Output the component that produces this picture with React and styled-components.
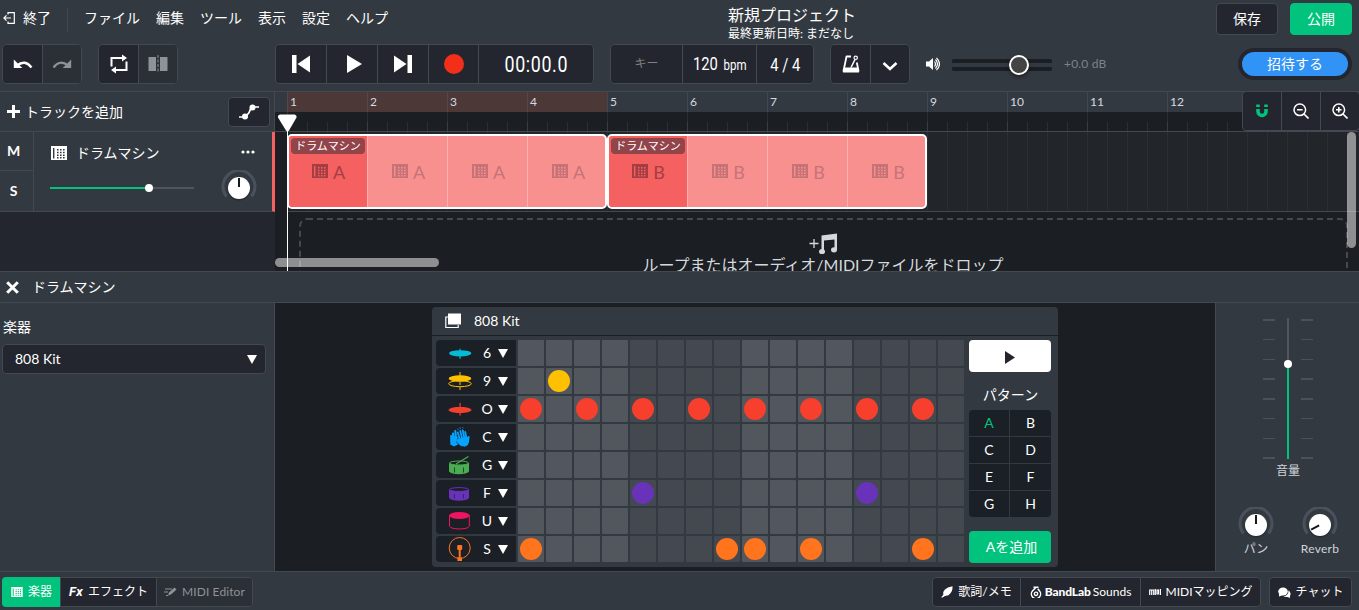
import React from "react";
import styled, { createGlobalStyle, css } from "styled-components";

const colors = {
  panel: "#333940",
  dark: "#23262e",
  darker: "#1b1e22",
  pad: "#1b1f26",
  line: "#44484f",
  green: "#02c37d",
  red: "#f56060",
};

const GlobalStyle = createGlobalStyle`
  * {
    box-sizing: border-box;
  }
  body {
    margin: 0;
    overflow: hidden;
    background: ${colors.panel};
  }
`;

const Page = styled.div`
  display: flex;
  flex-direction: column;
  width: 1359px;
  height: 610px;
  overflow: hidden;
  background: ${colors.panel};
  color: #fff;
  font-family: Lato, "Noto Sans CJK JP", sans-serif;
  font-size: 14px;
  line-height: 20px;
  white-space: nowrap;
  svg {
    display: block;
    flex: none;
  }
`;

const Header = styled.header`
  height: 92px;
  flex: none;
  border-bottom: 1px solid ${colors.line};
`;

const MenuRow = styled.div`
  display: grid;
  grid-template-columns: 728px 1fr auto;
  height: 44px;
  padding-right: 7px;
`;

const Menu = styled.nav`
  display: flex;
  align-items: center;
  height: 36px;
  padding-left: 3px;
`;

const MenuItem = styled.span`
  margin-right: 16px;
`;

const Exit = styled.span`
  display: flex;
  align-items: center;
  gap: 8px;
  height: 24px;
  margin-top: 4px;
  padding: 0 16px 4px 0;
  margin-right: 16px;
  border-right: 1px solid ${colors.line};
`;

const ProjectInfo = styled.div`
  padding-top: 4px;
`;

const ProjectName = styled.div`
  font-size: 16px;
  line-height: 22px;
`;

const ProjectDate = styled.div`
  font-size: 12px;
  line-height: 16px;
`;

const HeaderActions = styled.div`
  display: flex;
  gap: 12px;
  padding-top: 3px;
`;

const ActionButton = styled.button`
  width: 62px;
  height: 32px;
  padding: 0;
  border: 1px solid ${({ $primary }) => ($primary ? colors.green : colors.line)};
  border-radius: 4px;
  background: ${({ $primary }) => ($primary ? colors.green : colors.dark)};
  color: #fff;
  font: inherit;
`;

const TransportRow = styled.div`
  display: flex;
  height: 40px;
  padding: 0 7px 0 2px;
`;

const ButtonGroup = styled.div`
  display: flex;
  height: ${({ $height }) => $height || 40}px;
  margin-left: ${({ $left }) => $left || 0}px;
  border: 1px solid ${colors.line};
  border-radius: 4px;
  background: ${colors.dark};
`;

const GroupButton = styled.div`
  display: flex;
  align-items: center;
  justify-content: center;
  width: ${({ $width }) => $width}px;
  padding-left: ${({ $shift }) => $shift || 0}px;
  color: ${({ $disabled }) => ($disabled ? "#8f9297" : "#fff")};
  background: ${({ $disabled }) => ($disabled ? "#2b2f36" : "transparent")};
  &:last-child {
    border-radius: 0 3px 3px 0;
  }
  & + & {
    border-left: 1px solid ${colors.line};
  }
`;

const Digits = styled.span`
  padding-top: 1px;
  font-family: Roboto, sans-serif;
  font-size: ${({ $size }) => $size}px;
  letter-spacing: ${({ $spacing }) => $spacing || 0}px;
  transform: scaleX(${({ $scale }) => $scale || 0.82});
  small {
    margin-left: 7px;
    font-size: 14px;
  }
`;

const KeyLabel = styled.span`
  font-size: 12px;
  color: #7c7f85;
`;

const MasterVolume = styled.div`
  display: flex;
  align-items: center;
  margin-left: 16px;
`;

const MasterTrack = styled.div`
  display: flex;
  align-items: center;
  width: 100px;
  height: 12px;
  margin: 2px 12px 0 12px;
  border: solid ${colors.darker};
  border-width: 4px 0;
  border-radius: 2px;
`;

const MasterThumb = styled.div`
  width: 20px;
  height: 20px;
  margin: -8px 0 -8px 57px;
  border: 2px solid #fff;
  border-radius: 50%;
  background: rgba(70, 70, 70, 0.95);
  box-shadow: 0 2px 4px rgba(0, 0, 0, 0.4);
`;

const Decibels = styled.span`
  font-size: 12px;
  letter-spacing: 0.2px;
  color: #7d838e;
`;

const InviteButton = styled.button`
  width: 114px;
  height: 32px;
  margin: 4px 0 0 auto;
  padding: 0 0 1px;
  border: 4px solid ${colors.dark};
  border-radius: 16px;
  background: #3093f5;
  color: #fff;
  font: inherit;
  line-height: 20px;
`;

const Arrange = styled.section`
  display: flex;
  height: 179px;
  flex: none;
`;

const TrackList = styled.aside`
  width: 275px;
  flex: none;
  background: ${colors.dark};
`;

const AddTrack = styled.div`
  display: flex;
  align-items: center;
  height: 40px;
  padding: 0 4px 0 7px;
  gap: 5px;
  border-right: 1px solid ${colors.line};
  border-bottom: 1px solid ${colors.line};
  background: ${colors.panel};
`;

const AutomationButton = styled.div`
  display: flex;
  align-items: center;
  justify-content: center;
  width: 42px;
  height: 30px;
  margin-left: auto;
  border: 1px solid ${colors.line};
  border-radius: 4px;
  background: ${colors.dark};
`;

const Track = styled.div`
  display: flex;
  height: 80px;
  border-bottom: 1px solid ${colors.line};
  border-right: 3px solid ${colors.red};
  background: ${colors.panel};
`;

const MuteSolo = styled.div`
  display: grid;
  grid-template-rows: 38px 41px;
  width: 34px;
  border-right: 1px solid ${colors.line};
`;

const ToggleLetter = styled.div`
  padding-right: 6px;
  font-weight: 700;
  line-height: 38px;
  text-align: center;
  & + & {
    border-top: 1px solid ${colors.line};
    line-height: 39px;
  }
`;

const TrackBody = styled.div`
  flex: 1;
  padding: 11px 15px 0 16px;
`;

const TrackTitle = styled.div`
  display: flex;
  align-items: center;
  gap: 9px;
  padding: 0 2px 0 1px;
  svg:first-child {
    margin-top: -1px;
  }
  svg:last-child {
    margin: -3px 0 0 auto;
  }
`;

const TrackControls = styled.div`
  display: flex;
  align-items: center;
  justify-content: space-between;
  padding-top: 7px;
`;

const TrackVolume = styled.div`
  display: flex;
  align-items: center;
  width: 144px;
  height: 2px;
  background: linear-gradient(90deg, ${colors.green} 99px, #50555f 99px);
`;

const VolumeDot = styled.div`
  width: 8px;
  height: 8px;
  margin-left: 95px;
  border-radius: 50%;
  background: #fff;
`;

const Timeline = styled.div`
  position: relative;
  flex: 1;
  overflow: hidden;
  background: ${colors.darker};
`;

const Ruler = styled.div`
  display: flex;
  height: 40px;
  padding-left: 12px;
  border-bottom: 1px solid ${colors.line};
  background: linear-gradient(${colors.panel} 20px, ${colors.darker} 20px);
`;

const Bar = styled.div`
  width: 80px;
  height: 39px;
  flex: none;
  background:
    linear-gradient(rgba(255, 255, 255, 0.07) 0 0) 0 0 / 1px 39px no-repeat,
    repeating-linear-gradient(90deg, rgba(255, 255, 255, 0.07) 0 1px, transparent 1px 20px) 0 30px / 80px 9px no-repeat
    ${({ $loop }) => $loop && css`, linear-gradient(#4b3837 0 0) 0 0 / 80px 20px no-repeat`};
`;

const BarNumber = styled.div`
  padding-left: 3px;
  font-size: 12px;
  line-height: 19px;
  color: #d5dae1;
`;

const Lane = styled.div`
  display: flex;
  height: 80px;
  margin-left: 12px;
  padding-top: 2px;
  border-bottom: 1px solid ${colors.line};
  background: repeating-linear-gradient(90deg, #2c2f34 0 1px, #222529 1px 20px);
`;

const Clip = styled.div`
  position: relative;
  display: flex;
  width: 320px;
  height: 75px;
  border: 2px solid #fff;
  border-radius: 5px;
  overflow: hidden;
  background: #f99090;
`;

const ClipCell = styled.div`
  display: flex;
  flex: none;
  width: ${({ $first }) => ($first ? 78 : 80)}px;
  align-items: center;
  justify-content: center;
  gap: 5px;
  padding-left: 1px;
  color: ${({ $first }) => ($first ? "#a33e43" : "#c57377")};
  background: ${({ $first }) => ($first ? colors.red : "transparent")};
  font-size: 18px;
  svg {
    margin-top: -1px;
  }
  & + & {
    border-left: 1px solid #fbb1b1;
    padding-left: 2px;
  }
`;

const ClipLabel = styled.div`
  position: absolute;
  top: 2px;
  left: 2px;
  width: 74px;
  height: 16px;
  border-radius: 4px;
  background: #914449;
  font-size: 11px;
  line-height: 16px;
  text-align: center;
`;

const Playhead = styled.div`
  position: absolute;
  top: 22px;
  left: 2px;
  height: 157px;
  width: 20px;
  background: linear-gradient(#fff 0 0) 10px 16px / 1px 141px no-repeat;
`;

const DropZone = styled.div`
  position: relative;
  display: flex;
  flex-direction: column;
  align-items: center;
  width: 1049px;
  height: 90px;
  margin: 6px 0 0 24px;
  padding-top: 15px;
  color: #d3d9df;
  font-size: 16px;
`;

const DropText = styled.span`
  padding-right: 1px;
  line-height: 19px;
`;

const DashedFrame = styled.svg`
  position: absolute;
  top: 0;
  left: 0;
`;

const ScrollThumb = styled.div`
  position: absolute;
  border-radius: 5px;
  background: rgba(255, 255, 255, 0.5);
  ${({ $vertical }) => ($vertical
    ? css`top: 40px; right: 3px; width: 9px; height: 116px;`
    : css`bottom: 4px; left: 0; width: 164px; height: 9px;`)}
`;

const ZoomTools = styled.div`
  position: absolute;
  top: -1px;
  right: -1px;
`;

const PanelHeader = styled.div`
  display: flex;
  align-items: center;
  gap: 13px;
  height: 32px;
  flex: none;
  padding-left: 6px;
  border-top: 1px solid ${colors.line};
  border-bottom: 1px solid ${colors.line};
`;

const PanelBody = styled.section`
  display: flex;
  height: 268px;
  flex: none;
`;

const InstrumentPanel = styled.aside`
  width: 275px;
  padding: 14px 8px 0 2px;
  border-right: 1px solid ${colors.line};
`;

const InstrumentLabel = styled.div`
  padding-left: 1px;
`;

const Select = styled.div`
  display: flex;
  align-items: center;
  justify-content: space-between;
  height: 30px;
  margin-top: 7px;
  padding: 0 8px 0 12px;
  border: 1px solid ${colors.line};
  border-radius: 4px;
  background: ${colors.dark};
`;

const Latin = styled.span`
  letter-spacing: ${({ $spacing }) => $spacing || 0}px;
`;

const MachineArea = styled.main`
  display: flex;
  flex: 1;
  justify-content: center;
  padding-top: 4px;
  background: ${colors.darker};
`;

const Machine = styled.div`
  width: 626px;
  height: 260px;
  border-radius: 4px;
  background: ${colors.panel};
`;

const MachineHeader = styled.div`
  display: flex;
  align-items: center;
  gap: 12px;
  height: 29px;
  padding-left: 13px;
  border-bottom: 1px solid ${colors.darker};
`;

const MachineBody = styled.div`
  display: flex;
  justify-content: space-between;
  padding: 4px 7px 0 4px;
`;

const Rows = styled.div`
  display: flex;
  flex-direction: column;
  gap: 2px;
`;

const Row = styled.div`
  display: flex;
  gap: 2px;
`;

const PadLabel = styled.div`
  display: grid;
  grid-template-columns: 30px 23px 10px;
  align-items: center;
  justify-items: center;
  width: 80px;
  height: 26px;
  padding-left: 9px;
  border-radius: 4px 0 0 4px;
  background: ${colors.pad};
`;

const PadLetter = styled.span`
  padding-left: 1px;
`;

const Step = styled.div`
  width: 26px;
  height: 26px;
  padding: 2px;
  border-radius: 1px;
  background: ${({ $odd }) => ($odd ? "#44484f" : "#52565d")};
`;

const Hit = styled.div`
  width: 22px;
  height: 22px;
  border-radius: 50%;
  background: ${({ $color }) => $color};
`;

const Patterns = styled.div`
  width: 82px;
`;

const PlayButton = styled.div`
  display: flex;
  align-items: center;
  justify-content: center;
  height: 32px;
  padding-top: 2px;
  border-radius: 4px;
  background: #fff;
`;

const PatternTitle = styled.div`
  padding: 13px 0 5px 1px;
  text-align: center;
`;

const PatternGrid = styled.div`
  display: grid;
  grid-template-columns: 40px 41px;
  grid-auto-rows: 26px;
  gap: 1px;
  border-radius: 4px;
  overflow: hidden;
`;

const Pattern = styled.div`
  background: ${colors.pad};
  color: ${({ $active }) => ($active ? colors.green : "#fff")};
  line-height: 26px;
  text-align: center;
`;

const AddPattern = styled.div`
  height: 32px;
  margin-top: 14px;
  padding-left: 3px;
  border-radius: 4px;
  background: ${colors.green};
  line-height: 31px;
  text-align: center;
`;

const Mixer = styled.aside`
  width: 144px;
  border-left: 1px solid ${colors.line};
  color: #d0d4da;
  font-size: 12px;
`;

const Fader = styled.div`
  display: grid;
  grid-template-columns: 12px 2px 12px;
  justify-content: center;
  column-gap: 12px;
  padding: 15px 0 0 1px;
`;

const Ticks = styled.div`
  display: flex;
  flex-direction: column;
  justify-content: space-between;
  height: 141px;
  padding: 1px 0 0;
`;

const Tick = styled.div`
  height: 1.5px;
  background: #4b515b;
`;

const FaderTrack = styled.div`
  width: 2px;
  height: 141px;
  padding-top: 42px;
  background: linear-gradient(#50555f 46px, ${colors.green} 46px);
`;

const FaderThumb = styled.div`
  width: 8px;
  height: 8px;
  margin-left: -3px;
  border-radius: 50%;
  background: #fff;
`;

const FaderLabel = styled.div`
  padding: 1px 0 0 1px;
  text-align: center;
  line-height: 22px;
`;

const Knobs = styled.div`
  display: grid;
  grid-template-columns: 64px 64px;
  justify-content: center;
  padding: 25px 0 0 1px;
`;

const KnobField = styled.div`
  display: flex;
  flex-direction: column;
  align-items: center;
  line-height: 11px;
`;

const Footer = styled.footer`
  display: flex;
  flex: none;
  height: 39px;
  padding: 5px 7px 0 2px;
  border-top: 1px solid ${colors.line};
  font-size: 12px;
  line-height: 26px;
`;

const FooterSpacer = styled.div`
  flex: 1;
`;

const FooterTab = styled.div`
  display: flex;
  align-items: center;
  justify-content: center;
  gap: ${({ $gap }) => $gap || 5}px;
  width: ${({ $width }) => $width}px;
  color: ${({ $disabled }) => ($disabled ? "#8f9297" : "#fff")};
  ${({ $disabled }) => $disabled && css`
    border-radius: 0 3px 3px 0;
    background: #2b2f36;
  `}
  ${({ $active }) => $active && css`
    margin: -1px 0 -1px -1px;
    padding-left: 1px;
    border-radius: 4px 0 0 4px;
    background: ${colors.green};
  `}
  & + & {
    border-left: 1px solid ${colors.line};
  }
`;

const Brand = styled.b`
  margin-right: 2px;
  font-weight: 900;
  letter-spacing: -0.1px;
`;

const Fx = styled.b`
  font-family: Roboto, sans-serif;
  font-size: 13px;
  font-style: italic;
  letter-spacing: 0.3px;
`;

const Icon = ({ w, h, children }) => (
  <svg width={w} height={h} viewBox={`0 0 ${w} ${h}`} fill="currentColor">{children}</svg>
);

const stroke = (width) => ({ fill: "none", stroke: "currentColor", strokeWidth: width });

const DrumMachineIcon = ({ w = 16, h = 14 }) => (
  <svg width={w} height={h} viewBox="0 0 16 14" fill="currentColor">
    <path
      fillRule="evenodd"
      d="M0 0h16v14H0zM2 2v10.500h1.400V2zM6 3v1.500h1.600V3zM9 3v1.500h1.600V3zM12 3v1.500h1.600V3zM6 5.700v1.500h1.600V5.700zM9 5.700v1.500h1.600V5.700zM12 5.700v1.500h1.600V5.700zM6 8.400v1.500h1.600V8.400zM9 8.400v1.500h1.600V8.400zM12 8.400v1.500h1.600V8.400zM6 11v1.400h1.600V11zM9 11v1.400h1.600V11zM12 11v1.400h1.600V11z"
    />
  </svg>
);

const Caret = () => <Icon w={10} h={9}><path d="M0 0h10L5 9z" /></Icon>;

const Knob = ({ angle = 0 }) => (
  <svg width="36" height="36" viewBox="0 0 36 36">
    <path d="M5.500 26.500A16 16 0 1 1 30.500 26.500" fill="none" stroke="#4b515c" strokeWidth="3" />
    <circle cx="18" cy="19" r="11.500" fill="#000" opacity=".2" />
    <circle cx="18" cy="18" r="11" fill="#fff" />
    <path d="M18 8v9" stroke="#16181c" strokeWidth="2" transform={`rotate(${angle} 18 18)`} />
  </svg>
);

const padIcons = {
  crash: (
    <>
      <ellipse cx="12.200" cy="13.300" rx="11.200" ry="3.100" />
      <path d="M11.500 8.700h1.200v10h-1.200z" />
    </>
  ),
  hihat: (
    <>
      <ellipse cx="12" cy="10.500" rx="11.300" ry="3.200" />
      <ellipse cx="12" cy="15.700" rx="11.300" ry="3" {...stroke(1)} />
      <path d="M11.500 4h1v5h-1zM11.500 14h1v3h-1zM11.500 19h1v3h-1z" />
    </>
  ),
  cymbal: (
    <>
      <path d="M.200 13.900Q2 11.500 8 10.900h8q6 .6 7.800 3Q22 16.300 15 16.900H9Q2 16.300 .200 13.900z" />
      <path d="M11.500 7h1.200v12.500h-1.200z" />
    </>
  ),
  clap: (
    <>
      <path d="M2.500 17 2.200 20.500 6 22.500l5-2.500-1-7-5-1z" />
      <path d="M3.400 17.500 3.200 12M5.500 15 5 9.500M8 14 7.300 7" {...stroke(2.200)} strokeLinecap="round" />
      <path d="M9.500 14.500 18.500 12l2.500 1.500-.5 7.500-3.500 2-4.500-.8-3.500-3.700z" stroke={colors.pad} strokeWidth=".7" />
      <path d="M12 16 9.800 8.500M14.200 15 12.200 6.800M16.400 14.500 14.700 6.300M18.600 15 17.200 7.800M20 18.500l.7-5.500M12.500 19.500 9 16" {...stroke(1.800)} strokeLinecap="round" />
      <path d="m10.300 5.800-.6-1.200M12.300 4.800l-.3-1.300M15 4.200l-.2-.9" {...stroke(1)} />
    </>
  ),
  snare: (
    <>
      <path d="M1 11v8.500q2.500 2.700 10 2.700t10-2.700V11z" />
      <ellipse cx="11" cy="11" rx="9.500" ry="2" fill={colors.pad} stroke="currentColor" />
      <path d="m8 12 12.400-7.500" {...stroke(1.300)} />
      <path d="M6.500 15.500v5M15.500 15.500v5" stroke="#1f4a2c" />
    </>
  ),
  tom: (
    <>
      <path d="M1 9.500v8.500q2.500 2.700 10 2.700t10-2.700V9.500z" />
      <ellipse cx="11" cy="9.500" rx="9.500" ry="1.900" fill={colors.pad} stroke="currentColor" />
      <path d="M6.500 14v4.500M15.500 14v4.500" stroke="#3a2273" />
    </>
  ),
  floor: (
    <>
      <ellipse cx="11.400" cy="7.500" rx="10.400" ry="3.500" />
      <path d="M1.500 7.500v10.700c1 3.700 18.800 3.700 19.800 0V7.500" {...stroke(1)} />
    </>
  ),
  kick: (
    <>
      <circle cx="11.700" cy="12" r="10.500" {...stroke(1)} />
      <rect x="9.200" y="9" width="5" height="5" rx="1" />
      <path d="M10.700 13h2v9h-2z" />
      <path d="M9.400 21.500h4.600V25H9.400z" />
    </>
  ),
};

const PadIcon = ({ name, color }) => (
  <svg width="24" height="26" viewBox="0 0 24 26" fill="currentColor" color={color}>
    {padIcons[name]}
  </svg>
);

const pads = [
  { icon: "crash", letter: "6", color: "#06bbd6", hits: [] },
  { icon: "hihat", letter: "9", color: "#ffc002", hits: [1] },
  { icon: "cymbal", letter: "O", color: "#f73f2d", hits: [0, 2, 4, 6, 8, 10, 12, 14] },
  { icon: "clap", letter: "C", color: "#06a3ff", hits: [] },
  { icon: "snare", letter: "G", color: "#4aae50", hits: [] },
  { icon: "tom", letter: "F", color: "#6833b8", hits: [4, 12] },
  { icon: "floor", letter: "U", color: "#ee145f", hits: [] },
  { icon: "kick", letter: "S", color: "#ff741c", hits: [0, 7, 8, 10, 14] },
];

const steps = Array.from({ length: 16 }, (_, i) => i);
const bars = Array.from({ length: 14 }, (_, i) => i + 1);
const menuItems = ["ファイル", "編集", "ツール", "表示", "設定", "ヘルプ"];
const patternNames = ["A", "B", "C", "D", "E", "F", "G", "H"];

const TopBar = () => (
  <Header>
    <MenuRow>
      <Menu>
        <Exit>
          <Icon w={12} h={12}>
            <path d="M5 2.500V.700h6.300v10.600H5V9.500M8 6H1M3.500 3.300.900 6l2.600 2.700" {...stroke(1.200)} />
          </Icon>
          終了
        </Exit>
        {menuItems.map((item) => <MenuItem key={item}>{item}</MenuItem>)}
      </Menu>
      <ProjectInfo>
        <ProjectName>新規プロジェクト</ProjectName>
        <ProjectDate>最終更新日時: まだなし</ProjectDate>
      </ProjectInfo>
      <HeaderActions>
        <ActionButton>保存</ActionButton>
        <ActionButton $primary>公開</ActionButton>
      </HeaderActions>
    </MenuRow>
    <TransportRow>
      <ButtonGroup>
        <GroupButton $width={39}>
          <Icon w={20} h={12}>
            <path d="M4 7.500Q12 1 18.500 9.500" {...stroke(2.400)} />
            <path d="M.800 1.500v8.500h8.500z" />
          </Icon>
        </GroupButton>
        <GroupButton $width={39} $disabled>
          <Icon w={20} h={12}>
            <path d="M16 7.500Q8 1 1.500 9.500" {...stroke(2.200)} />
            <path d="M19.200 1.500v8.500h-8.500z" />
          </Icon>
        </GroupButton>
      </ButtonGroup>
      <ButtonGroup $left={16}>
        <GroupButton $width={39}>
          <Icon w={18} h={20}>
            <path d="M1.500 12.500V4H13M16.500 7.500V16H5" {...stroke(2)} />
            <path d="m12 .5 5 3.500-5 3.500zM6 12.500 1 16l5 3.500z" />
          </Icon>
        </GroupButton>
        <GroupButton $width={39} $disabled>
          <Icon w={20} h={20}>
            <path d="M.500 3H8v14H.500zM12 3h7.500v14H12z" />
            <path d="M10 1v18" strokeDasharray="3 1.500" {...stroke(1)} />
          </Icon>
        </GroupButton>
      </ButtonGroup>
      <ButtonGroup $left={97}>
        <GroupButton $width={50}>
          <Icon w={18} h={18}><path d="M0 0h4.500v18H0zM18 .5v17L5.500 9z" /></Icon>
        </GroupButton>
        <GroupButton $width={51} $shift={4}>
          <Icon w={15} h={18}><path d="M0 0v18l15-9z" /></Icon>
        </GroupButton>
        <GroupButton $width={51}>
          <Icon w={18} h={18}><path d="M13.500 0H18v18h-4.500zM0 .5v17L12.500 9z" /></Icon>
        </GroupButton>
        <GroupButton $width={50}>
          <Icon w={20} h={20}><circle cx="10" cy="10" r="10" fill="#f32f1a" /></Icon>
        </GroupButton>
        <GroupButton $width={115}>
          <Digits $size={22} $scale={0.81} $spacing={0.8}>00:00.0</Digits>
        </GroupButton>
      </ButtonGroup>
      <ButtonGroup $left={16}>
        <GroupButton $width={71}><KeyLabel>キー</KeyLabel></GroupButton>
        <GroupButton $width={74}>
          <Digits $size={18}>
            120
            <small>bpm</small>
          </Digits>
        </GroupButton>
        <GroupButton $width={57}><Digits $size={18}>4 / 4</Digits></GroupButton>
      </ButtonGroup>
      <ButtonGroup $left={16}>
        <GroupButton $width={39}>
          <Icon w={18} h={18}>
            <path d="M9 1.500H4.500L1.500 16h15L14.800 7.500" strokeLinejoin="round" {...stroke(1.800)} />
            <path d="M2 12.500h14l1 5H1z" />
            <path d="m9 12.500 4-8" {...stroke(1.600)} />
            <circle cx="13.700" cy="2.800" r="1.700" {...stroke(1.200)} />
          </Icon>
        </GroupButton>
        <GroupButton $width={39}>
          <Icon w={16} h={16}><path d="m1.500 7 6.500 6 6.500-6" {...stroke(2.600)} /></Icon>
        </GroupButton>
      </ButtonGroup>
      <MasterVolume>
        <Icon w={14} h={14}>
          <path d="M0 4.500h3L7 1v12L3 9.500H0z" />
          <path d="M8.500 4.500q2 2.500 0 5M9.500 2.500q4 4.500 0 9M10.500.800q6 6.200 0 12.400" {...stroke(1.200)} />
        </Icon>
        <MasterTrack><MasterThumb /></MasterTrack>
        <Decibels>+0.0 dB</Decibels>
      </MasterVolume>
      <InviteButton>招待する</InviteButton>
    </TransportRow>
  </Header>
);

const ClipBlock = ({ pattern }) => (
  <Clip>
    {[0, 1, 2, 3].map((i) => (
      <ClipCell key={i} $first={i === 0}>
        <DrumMachineIcon />
        {pattern}
      </ClipCell>
    ))}
    <ClipLabel>ドラムマシン</ClipLabel>
  </Clip>
);

const Arrangement = () => (
  <Arrange>
    <TrackList>
      <AddTrack>
        <Icon w={13} h={13}><path d="M5 0h3v5h5v3H8v5H5V8H0V5h5z" /></Icon>
        トラックを追加
        <AutomationButton>
          <Icon w={20} h={16}>
            <path d="M0 13h5M15 3h5M6.500 12Q10 10 10.500 7.500T14 3" {...stroke(1.600)} />
            <circle cx="6" cy="12.500" r="3" />
            <circle cx="13.500" cy="3.500" r="3" />
          </Icon>
        </AutomationButton>
      </AddTrack>
      <Track>
        <MuteSolo>
          <ToggleLetter>M</ToggleLetter>
          <ToggleLetter>S</ToggleLetter>
        </MuteSolo>
        <TrackBody>
          <TrackTitle>
            <DrumMachineIcon />
            ドラムマシン
            <Icon w={14} h={4}>
              <circle cx="2" cy="2" r="1.600" />
              <circle cx="7" cy="2" r="1.600" />
              <circle cx="12" cy="2" r="1.600" />
            </Icon>
          </TrackTitle>
          <TrackControls>
            <TrackVolume><VolumeDot /></TrackVolume>
            <Knob />
          </TrackControls>
        </TrackBody>
      </Track>
    </TrackList>
    <Timeline>
      <Ruler>
        {bars.map((bar) => (
          <Bar key={bar} $loop={bar < 5}><BarNumber>{bar}</BarNumber></Bar>
        ))}
      </Ruler>
      <Lane>
        <ClipBlock pattern="A" />
        <ClipBlock pattern="B" />
      </Lane>
      <DropZone>
        <DashedFrame width="1049" height="90">
          <rect x="1" y="1" width="1047" height="120" rx="7" fill="none" stroke="#44484f" strokeWidth="2" strokeDasharray="6 4" />
        </DashedFrame>
        <Icon w={29} h={22}>
          <path d="M.500 10.500h9M5 6v9" {...stroke(1.300)} />
          <path d="M12.500 2.500 28 .500v16.500h-2.500V6.500L15 7.500v11.500h-2.500z" />
          <ellipse cx="13" cy="18.500" rx="3" ry="2.600" />
          <ellipse cx="25" cy="16.800" rx="3" ry="2.600" />
        </Icon>
        <DropText>ループまたはオーディオ/MIDIファイルをドロップ</DropText>
      </DropZone>
      <ScrollThumb />
      <Playhead>
        <Icon w={20} h={18}>
          <path d="M3 .5h14.500q2.500 .5 2 3L12 16.500q-1.500 2-3 0L1 3.500Q.500 1 3 .500z" />
        </Icon>
      </Playhead>
      <ScrollThumb $vertical />
      <ZoomTools>
        <ButtonGroup>
          <GroupButton $width={38}>
            <Icon w={14} h={14}>
              <path d="M3 5v2.500a4 4 0 0 0 8 0V5" fill="none" stroke={colors.green} strokeWidth="3.600" />
              <path d="M1.200.500h3.600v2.500H1.200zM9.200.500h3.600v2.500H9.200z" fill={colors.green} />
            </Icon>
          </GroupButton>
          <GroupButton $width={39}>
            <Icon w={16} h={16}>
              <circle cx="6.800" cy="6.800" r="5.800" {...stroke(1.500)} />
              <path d="m11 11 4.500 4.500M4 6.800h5.600" {...stroke(1.600)} />
            </Icon>
          </GroupButton>
          <GroupButton $width={39}>
            <Icon w={16} h={16}>
              <circle cx="6.800" cy="6.800" r="5.800" {...stroke(1.500)} />
              <path d="m11 11 4.500 4.500M4 6.800h5.600M6.800 4v5.600" {...stroke(1.600)} />
            </Icon>
          </GroupButton>
        </ButtonGroup>
      </ZoomTools>
    </Timeline>
  </Arrange>
);

const DrumMachine = () => (
  <Machine>
    <MachineHeader>
      <Icon w={17} h={16}>
        <path d="M3 .500h13v11H3z" />
        <path d="M3 4H.800v10.500h12.400V12" {...stroke(1.200)} />
      </Icon>
      <Latin>808 Kit</Latin>
    </MachineHeader>
    <MachineBody>
      <Rows>
        {pads.map((pad) => (
          <Row key={pad.letter}>
            <PadLabel>
              <PadIcon name={pad.icon} color={pad.color} />
              <PadLetter>{pad.letter}</PadLetter>
              <Caret />
            </PadLabel>
            {steps.map((step) => (
              <Step key={step} $odd={Math.floor(step / 4) % 2 === 1}>
                {pad.hits.includes(step) && <Hit $color={pad.color} />}
              </Step>
            ))}
          </Row>
        ))}
      </Rows>
      <Patterns>
        <PlayButton>
          <Icon w={10} h={13}><path d="M0 0v13l10-6.500z" fill={colors.dark} /></Icon>
        </PlayButton>
        <PatternTitle>パターン</PatternTitle>
        <PatternGrid>
          {patternNames.map((name) => (
            <Pattern key={name} $active={name === "A"}>{name}</Pattern>
          ))}
        </PatternGrid>
        <AddPattern>Aを追加</AddPattern>
      </Patterns>
    </MachineBody>
  </Machine>
);

const TickColumn = () => (
  <Ticks>
    {steps.slice(0, 8).map((i) => <Tick key={i} />)}
  </Ticks>
);

const ChannelMixer = () => (
  <Mixer>
    <Fader>
      <TickColumn />
      <FaderTrack><FaderThumb /></FaderTrack>
      <TickColumn />
    </Fader>
    <FaderLabel>音量</FaderLabel>
    <Knobs>
      <KnobField>
        <Knob />
        パン
      </KnobField>
      <KnobField>
        <Knob angle={-118} />
        <Latin $spacing={0.3}>Reverb</Latin>
      </KnobField>
    </Knobs>
  </Mixer>
);

const BottomBar = () => (
  <Footer>
    <ButtonGroup $height={30}>
      <FooterTab $width={58} $active>
        <DrumMachineIcon w={12} h={10} />
        楽器
      </FooterTab>
      <FooterTab $width={96}>
        <Fx>Fx</Fx>
        エフェクト
      </FooterTab>
      <FooterTab $width={96} $disabled>
        <Icon w={13} h={10}>
          <path d="M1 2h7M0 5h4M2 8.500h2" {...stroke(1.200)} />
          <path d="m4 8.500 1-3L10.500.500l2 2L7 7.500z" />
        </Icon>
        <Latin $spacing={0.1}>MIDI Editor</Latin>
      </FooterTab>
    </ButtonGroup>
    <FooterSpacer />
    <ButtonGroup $height={30}>
      <FooterTab $width={87}>
        <Icon w={12} h={12}>
          <path d="M11.500.300Q12 6 7.500 9.300L4 10 1 11.800.300 11.200l2-2.500Q1 2.500 11.500.300z" />
        </Icon>
        歌詞/メモ
      </FooterTab>
      <FooterTab $width={120} $gap={3}>
        <Icon w={12} h={12}>
          <path d="M5 1.200H3.500M5.800 1.500 2.700 4.800a4.600 4.600 0 1 0 6.600 0L7.800 2.800" {...stroke(1.500)} />
          <path d="M5 .500h3.500V2H5z" />
          <circle cx="6" cy="7.800" r="1.700" {...stroke(1.300)} />
        </Icon>
        <span>
          <Brand>BandLab</Brand>
          <Latin>Sounds</Latin>
        </span>
      </FooterTab>
      <FooterTab $width={120}>
        <Icon w={12} h={6}>
          <path d="M.700 6V1h4v5M2.700 1v5M6.300 0v6M8 1h1.500v4H8zM11.400 0v6" {...stroke(1.200)} />
        </Icon>
        MIDIマッピング
      </FooterTab>
    </ButtonGroup>
    <ButtonGroup $height={30} $left={8}>
      <FooterTab $width={81}>
        <Icon w={13} h={11}>
          <ellipse cx="5" cy="4.500" rx="4.800" ry="4" />
          <path d="M1 6v3.500l4-1.500zM10.500 3.300q.2 5-5 6 2 1.200 4.200.6l2.300 1v-2q1.700-3-1.500-5.600z" />
        </Icon>
        チャット
      </FooterTab>
    </ButtonGroup>
  </Footer>
);

const App = () => (
  <Page>
    <GlobalStyle />
    <TopBar />
    <Arrangement />
    <PanelHeader>
      <Icon w={13} h={13}><path d="m1.200 1.200 10.600 10.600m0-10.600L1.200 11.800" {...stroke(3)} /></Icon>
      ドラムマシン
    </PanelHeader>
    <PanelBody>
      <InstrumentPanel>
        <InstrumentLabel>楽器</InstrumentLabel>
        <Select>
          <Latin>808 Kit</Latin>
          <Caret />
        </Select>
      </InstrumentPanel>
      <MachineArea>
        <DrumMachine />
      </MachineArea>
      <ChannelMixer />
    </PanelBody>
    <BottomBar />
  </Page>
);

export default App;
